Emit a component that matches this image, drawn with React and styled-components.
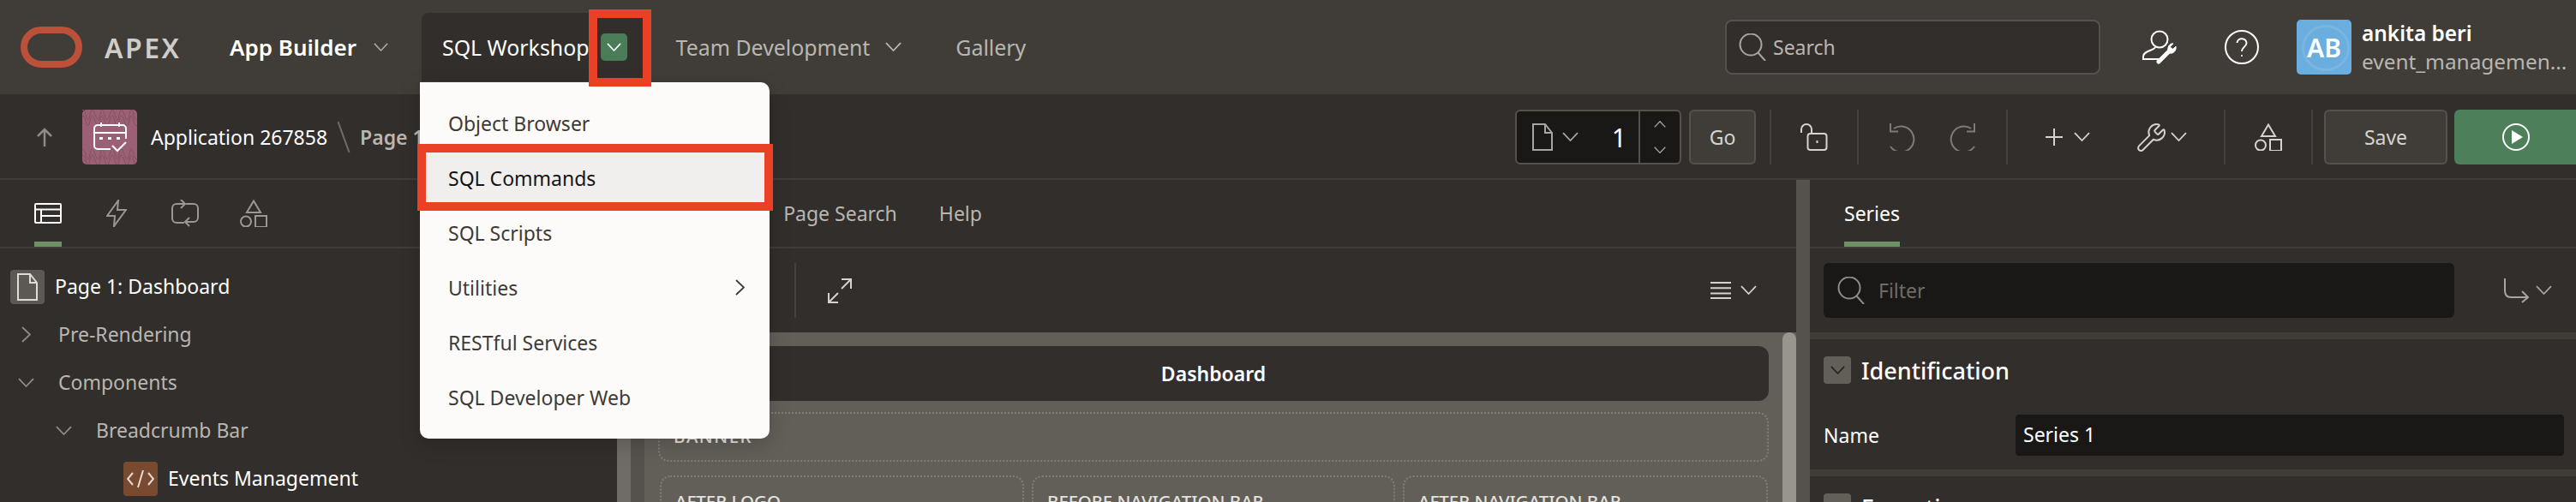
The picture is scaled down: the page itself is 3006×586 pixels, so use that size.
import React from 'react'
import styled, { createGlobalStyle } from 'styled-components'
import { Wrench } from 'lucide-react'

const GlobalStyle = createGlobalStyle`
  html, body {
    margin: 0;
    padding: 0;
    width: 3006px;
    height: 586px;
    overflow: hidden;
    background: #322e2b;
  }
  * { box-sizing: border-box; }
`

const wave = (y, n, amp) => {
  let d = `M-2 ${y} q3 ${-amp} 6 0`
  for (let i = 0; i < n; i++) d += ` t${i % 3 === 0 ? 5 : 6} 0`
  return d
}

function Chevron({ size = 19, color = 'currentColor' }) {
  return (
    <svg width={size} height={size * 0.58} viewBox="0 0 19 11" fill="none" stroke={color} strokeWidth="1.8">
      <path d="M1 1 L9.5 10 L18 1" />
    </svg>
  )
}

function SearchIcon({ color }) {
  return (
    <svg width="32" height="32" viewBox="0 0 32 32" fill="none" stroke={color} strokeWidth="2">
      <ellipse cx="14" cy="13" rx="12.5" ry="12.5" />
      <path d="M22.5 22.5 L31 32" />
    </svg>
  )
}

function DocIcon({ color }) {
  return (
    <svg width="24" height="32" viewBox="0 0 24 32" fill="none" stroke={color} strokeWidth="2">
      <path d="M1 1 H15 L23 11 V31 H1 Z M15 1 V11 H23" />
    </svg>
  )
}

function ShapesIcon({ color }) {
  return (
    <svg width="32" height="32" viewBox="0 0 32 32" fill="none" stroke={color} strokeWidth="2">
      <path d="M16 1.5 L24 15 H8 Z" />
      <circle cx="7" cy="25.5" r="6" />
      <rect x="18" y="19" width="13" height="13" />
    </svg>
  )
}

function OracleLogo() {
  return (
    <svg width="72" height="48" viewBox="0 0 72 48" fill="none">
      <rect x="4" y="4" width="64" height="40" rx="20" stroke="#bc5039" strokeWidth="8" />
    </svg>
  )
}

function UserWrenchIcon() {
  return (
    <svg width="40" height="40" viewBox="0 0 40 40" fill="none" stroke="#fff" strokeWidth="2">
      <circle cx="20" cy="11" r="9.5" />
      <path d="M15 20 C14 24 1 24 1 31 V34 H19" />
      <path d="M19 37 L33 23" strokeWidth="5" strokeLinecap="round" />
      <path d="M30 24 C29 19 33 15 36 16 L32 20 L35 23 L39 19 C40 24 36 28 32 27 Z" fill="#fff" strokeWidth="1" />
    </svg>
  )
}

function HelpIcon() {
  return (
    <svg width="40" height="40" viewBox="0 0 40 40" fill="none" stroke="#fff" strokeWidth="2">
      <circle cx="20" cy="20" r="19" />
      <path d="M14.5 15 C15 8 26 9 25.5 15.5 C25 20 20 20 20 25" />
      <circle cx="20" cy="30" r="1" fill="#fff" stroke="none" />
    </svg>
  )
}

function CalendarBadge() {
  const rows = [6, 13, 52, 59]
  return (
    <svg width="64" height="64" viewBox="0 0 64 64" fill="none">
      <rect width="64" height="64" rx="5" fill="#9b6075" />
      {rows.map((y) => (
        <path key={y} d={wave(y, 11, 12)} stroke="#86505f" strokeWidth="1" />
      ))}
      <path
        d="M33 46 H18 a4 4 0 0 1 -4 -4 V22 a4 4 0 0 1 4 -4 H47 a4 4 0 0 1 4 4 V34 M14 27 H51 M22 15 V20 M43 15 V20"
        stroke="#fff"
        strokeWidth="2"
      />
      <path d="M20 32 h4 v3 h-4 z M30 32 h4 v3 h-4 z M40 32 h4 v3 h-4 z" fill="#fff" />
      <path d="M35 42 L41 48 L51 38" stroke="#fff" strokeWidth="2" />
    </svg>
  )
}

function LayoutIcon() {
  return (
    <svg width="32" height="24" viewBox="0 0 32 24" fill="none" stroke="#fff" strokeWidth="2">
      <rect x="1" y="1" width="30" height="22" rx="1" />
      <path d="M1 7.5 H31 M8 7.5 V23 M8 15 H31" />
    </svg>
  )
}

function BoltIcon() {
  return (
    <svg width="24" height="32" viewBox="0 0 24 32" fill="none" stroke="#9b9893" strokeWidth="2">
      <path d="M14 1 L1 19 H10 L9 31 L23 12 H13 Z" />
    </svg>
  )
}

function CycleIcon() {
  return (
    <svg width="32" height="32" viewBox="0 0 32 32" fill="none" stroke="#9b9893" strokeWidth="2">
      <path d="M17 5 H26 a5 5 0 0 1 5 5 V21 a5 5 0 0 1 -5 5 H17 M21 21 L16 26 L21 31" />
      <path d="M15 27 H6 a5 5 0 0 1 -5 -5 V10 a5 5 0 0 1 5 -5 H15 M11 0 L16 5 L11 10" />
    </svg>
  )
}

function CodeIcon() {
  return (
    <svg width="32" height="22" viewBox="0 0 32 22" fill="none" stroke="#e8dcd3" strokeWidth="2">
      <path d="M7 4 L1 11 L7 18 M25 4 L31 11 L25 18 M19 1 L13 21" />
    </svg>
  )
}

function LockOpenIcon() {
  return (
    <svg width="32" height="32" viewBox="0 0 32 32" fill="none" stroke="#d5d3cf" strokeWidth="2">
      <rect x="8.5" y="12" width="22" height="19" rx="3" />
      <path d="M1 11 V7 a6 6 0 0 1 12 0 V12 M19.5 20 V23" />
    </svg>
  )
}

function UndoIcon() {
  return (
    <svg width="30" height="32" viewBox="0 0 30 32" fill="none" stroke="#7e7b76" strokeWidth="2">
      <path d="M1 27 A15 15 0 1 0 5 6 M1 0 V9.5 H10" />
    </svg>
  )
}

function RedoIcon() {
  return (
    <svg width="30" height="32" viewBox="0 0 30 32" fill="none" stroke="#7e7b76" strokeWidth="2">
      <path d="M29 27 A15 15 0 1 1 25 6 M29 0 V9.5 H20" />
    </svg>
  )
}

function PlusIcon() {
  return (
    <svg width="20" height="20" viewBox="0 0 20 20" fill="none" stroke="#d5d3cf" strokeWidth="2">
      <path d="M10 0 V20 M0 10 H20" />
    </svg>
  )
}

function RunIcon() {
  return (
    <svg width="32" height="32" viewBox="0 0 32 32" fill="none" stroke="#fff" strokeWidth="2">
      <circle cx="16" cy="16" r="15" />
      <path d="M11 8 L24 16 L11 24 Z" fill="#fff" stroke="none" />
    </svg>
  )
}

function ExpandIcon() {
  return (
    <svg width="28" height="29" viewBox="0 0 28 29" fill="none" stroke="#d5d3cf" strokeWidth="2">
      <path d="M16 1 H27 V12 M27 1 L16 12 M1 17 V28 H12 M1 28 L12 17" />
    </svg>
  )
}

function MenuLinesIcon() {
  return (
    <svg width="24" height="20" viewBox="0 0 24 20" fill="none" stroke="#d5d3cf" strokeWidth="2">
      <path d="M0 1 H24 M0 7.3 H24 M0 13.6 H24 M0 19 H24" />
    </svg>
  )
}

function GotoIcon() {
  return (
    <svg width="29" height="29" viewBox="0 0 29 29" fill="none" stroke="#a8a5a0" strokeWidth="2">
      <path d="M1 0 V14 C1 20 4 22 8 22 H27 M21 15 L28 22 L21 28" />
    </svg>
  )
}

const Page = styled.div`
  position: relative;
  width: 3006px;
  height: 586px;
  overflow: hidden;
  display: flex;
  flex-direction: column;
  background: #322e2b;
  font-family: "Noto Sans", "Open Sans", sans-serif;
  font-size: 23px;
  color: #fff;
`

const Header = styled.header`
  flex: 0 0 110px;
  display: flex;
  align-items: center;
  padding: 0 18px 0 24px;
  background: #403d38;
`

const Brand = styled.span`
  margin-left: 26px;
  width: 96px;
  font-size: 32px;
  font-weight: 600;
  letter-spacing: 2.5px;
  color: #cfcdc9;
`

const Nav = styled.nav`
  display: flex;
  gap: 15px;
  margin-left: 26px;
  font-size: 24.9px;
`

const NavItem = styled.div`
  display: flex;
  align-items: center;
  gap: ${(p) => p.$gap || 18}px;
  height: 80px;
  padding: ${(p) => (p.$active ? '0 18px 0 24px' : '0 24px')};
  border-radius: 8px 8px 0 0;
  background: ${(p) => (p.$active ? '#322e2b' : 'transparent')};
  color: ${(p) => p.$color || '#b9b6b1'};
  font-size: ${(p) => (p.$weight ? '26px' : 'inherit')};
  font-weight: ${(p) => p.$weight || 400};
  white-space: nowrap;
`

const GreenToggle = styled.span`
  display: flex;
  align-items: center;
  justify-content: center;
  width: 31px;
  height: 32px;
  border-radius: 5px;
  background: #4a7d57;
  color: #fff;
`

const SearchBox = styled.div`
  display: flex;
  align-items: center;
  gap: 8px;
  width: 438px;
  height: 64px;
  margin-left: auto;
  padding: 0 14px;
  background: #322e2b;
  border: 2px solid #55514c;
  border-radius: 8px;
  color: #b9b6b1;
`

const HeadIcon = styled.span`
  display: flex;
  margin-left: ${(p) => p.$left}px;
`

const Avatar = styled.div`
  position: relative;
  display: flex;
  align-items: center;
  justify-content: center;
  width: 64px;
  height: 64px;
  margin-left: 44px;
  overflow: hidden;
  border-radius: 5px;
  background: #69aedf;
  font-size: 30px;
  font-weight: 600;
  &::before {
    content: "";
    position: absolute;
    inset: 6px 2px 4px 6px;
    border: 3px solid #7cb6df;
    border-radius: 50%;
  }
`

const AvatarText = styled.span`
  position: relative;
`

const UserBlock = styled.div`
  display: flex;
  flex-direction: column;
  width: 232px;
  margin-left: 12px;
  white-space: nowrap;
  font-size: 24.4px;
  line-height: 33px;
`

const UserName = styled.span`
  font-weight: 600;
`

const UserSub = styled.span`
  color: #b9b6b1;
`

const Toolbar = styled.div`
  flex: 0 0 100px;
  display: flex;
  align-items: center;
  padding-left: 42px;
  padding-top: 2px;
  border-bottom: 2px solid #403d38;
`

const UpArrow = styled.svg`
  width: 20px;
  height: 22px;
  margin-right: 34px;
`

const Crumb = styled.span`
  margin-left: ${(p) => p.$left || 0}px;
  font-weight: ${(p) => p.$weight || 400};
  color: ${(p) => p.$color || '#fff'};
  white-space: nowrap;
`

const CrumbSlash = styled.span`
  width: 2px;
  height: 38px;
  margin: 0 18px 0 18px;
  background: #6f6c66;
  transform: rotate(-20deg);
`

const PageBox = styled.div`
  display: flex;
  align-items: center;
  width: 194px;
  height: 64px;
  margin-left: auto;
  padding-left: 18px;
  background: #191816;
  border: 2px solid #55514c;
  border-radius: 6px;
  color: #a8a5a0;
`

const PageKind = styled.span`
  display: flex;
  align-items: center;
  gap: 11px;
`

const PageNumber = styled.span`
  flex: 1;
  padding-right: 14px;
  text-align: right;
  color: #fff;
  font-size: 30px;
`

const Spinner = styled.div`
  display: flex;
  flex-direction: column;
  align-items: center;
  justify-content: center;
  gap: 22px;
  width: 48px;
  height: 100%;
  border-left: 2px solid #55514c;
  svg:first-child { transform: rotate(180deg); }
`

const ToolButton = styled.button`
  display: flex;
  align-items: center;
  justify-content: center;
  width: ${(p) => p.$width}px;
  height: 64px;
  margin-left: ${(p) => p.$left}px;
  background: #403d38;
  border: 2px solid #55514c;
  border-radius: 6px;
  color: #d5d3cf;
  font: inherit;
`

const Divider = styled.span`
  flex: 0 0 2px;
  height: 64px;
  margin-left: ${(p) => p.$left || 0}px;
  background: #45413d;
`

const ToolSection = styled.div`
  display: flex;
  align-items: center;
  justify-content: center;
  gap: ${(p) => p.$gap || 0}px;
  width: ${(p) => p.$width}px;
  color: #d5d3cf;
`

const ToolCombo = styled.span`
  display: flex;
  align-items: center;
  gap: ${(p) => p.$gap}px;
`

const RunButton = styled.div`
  display: flex;
  align-items: center;
  flex: 0 0 142px;
  height: 64px;
  margin-left: 8px;
  padding-left: 56px;
  background: #4d7f5a;
  border-radius: 6px 0 0 6px;
`

const Body = styled.div`
  flex: 1;
  display: flex;
  min-height: 0;
`

const Column = styled.section`
  display: flex;
  flex-direction: column;
  flex: 0 0 ${(p) => p.$width}px;
  min-width: 0;
`

const Splitter = styled.div`
  flex: 0 0 16px;
  background: #55514c;
`

const PanelScroll = styled.div`
  flex: 0 0 16px;
  background: #6f6b66;
`

const TabBar = styled.div`
  flex: 0 0 80px;
  display: flex;
  align-items: stretch;
  gap: ${(p) => p.$gap}px;
  padding-left: ${(p) => p.$left}px;
  border-bottom: 2px solid #403d38;
`

const Tab = styled.div`
  display: flex;
  align-items: center;
  justify-content: center;
  height: 78px;
  padding-top: 6px;
  border-bottom: 6px solid ${(p) => (p.$on ? '#6e9168' : 'transparent')};
  color: ${(p) => (p.$on ? '#fff' : '#b9b6b1')};
  white-space: nowrap;
`

const IconTab = styled(Tab)`
  width: 32px;
`

const Tree = styled.div`
  padding-top: 17px;
`

const TreeRow = styled.div`
  display: flex;
  align-items: center;
  height: 56px;
  padding-left: ${(p) => p.$indent}px;
  color: ${(p) => (p.$bright ? '#fff' : '#b9b6b1')};
  white-space: nowrap;
`

const TreeLabel = styled.span`
  margin-bottom: 3px;
`

const TreeToggle = styled.span`
  display: flex;
  align-items: center;
  justify-content: center;
  width: 44px;
  margin-right: 16px;
  color: #8f8c87;
  svg { transform: ${(p) => (p.$closed ? 'rotate(-90deg)' : 'none')}; }
`

const NodeIcon = styled.span`
  display: flex;
  align-items: center;
  justify-content: center;
  width: 40px;
  height: 40px;
  margin-right: 12px;
  border-radius: 4px;
  background: ${(p) => p.$bg};
`

const CenterTools = styled.div`
  flex: 0 0 98px;
  display: flex;
  align-items: center;
  padding: 0 46px 0 175px;
`

const ExpandSlot = styled.span`
  display: flex;
  margin-left: 37px;
`

const ViewMenu = styled.span`
  display: flex;
  align-items: center;
  gap: 11px;
  margin-left: auto;
  color: #d5d3cf;
`

const Canvas = styled.div`
  flex: 1;
  display: flex;
  min-height: 0;
  background: #625e58;
`

const CanvasInner = styled.div`
  flex: 1;
  display: flex;
  flex-direction: column;
  padding: 16px 16px 0;
  min-width: 0;
`

const CanvasScroll = styled.div`
  flex: 0 0 16px;
  background: #98958f;
  border-radius: 8px 8px 0 0;
`

const TitleBar = styled.div`
  flex: 0 0 64px;
  display: flex;
  align-items: center;
  justify-content: center;
  border-radius: 12px;
  background: #322e2b;
  font-weight: 600;
`

const Slot = styled.div`
  padding: ${(p) => (p.$wide ? '12px 16px' : '14px 16px')};
  height: ${(p) => (p.$wide ? '58px' : '80px')};
  border: 2px dotted #807c76;
  border-radius: 12px;
  color: #e4e2de;
  font-size: 20.5px;
  font-weight: 500;
  letter-spacing: ${(p) => (p.$wide ? '1.5px' : '0')};
  white-space: nowrap;
`

const BannerSlot = styled(Slot)`
  flex: 0 0 58px;
  margin-top: 13px;
`

const SlotRow = styled.div`
  display: grid;
  grid-template-columns: 425px 424px 426px;
  gap: 9px;
  margin: 16px 2px 0;
`

const FilterRow = styled.div`
  flex: 0 0 98px;
  display: flex;
  align-items: center;
  padding-left: 16px;
`

const FilterBox = styled.div`
  display: flex;
  align-items: center;
  gap: 16px;
  width: 736px;
  height: 64px;
  padding-left: 16px;
  border-radius: 6px;
  background: #191816;
  color: #6f6c66;
`

const OrderMenu = styled.span`
  display: flex;
  align-items: center;
  gap: 8px;
  margin-left: 58px;
  color: #a8a5a0;
`

const Group = styled.div`
  padding: 20px 14px 16px 16px;
  border-top: 8px solid #403d38;
`

const GroupHead = styled.div`
  display: flex;
  align-items: center;
  gap: 12px;
  height: 32px;
  font-size: 27px;
  font-weight: 500;
`

const GroupToggle = styled.span`
  display: flex;
  align-items: center;
  justify-content: center;
  width: 32px;
  height: 32px;
  border-radius: 4px;
  background: #625e58;
  color: #23211f;
`

const Field = styled.div`
  display: flex;
  align-items: center;
  margin-top: 36px;
`

const FieldLabel = styled.label`
  flex: 0 0 224px;
`

const FieldInput = styled.div`
  flex: 1;
  height: 48px;
  padding-left: 9px;
  line-height: 46px;
  border-radius: 4px;
  background: #191816;
`

const Menu = styled.div`
  position: absolute;
  left: 490px;
  top: 96px;
  width: 408px;
  height: 416px;
  padding: 17px 0;
  border-radius: 0 10px 10px 10px;
  background: #fcfbf9;
  color: #3e3b37;
  box-shadow: 0 6px 24px rgba(0, 0, 0, 0.18);
`

const MenuItem = styled.div`
  position: relative;
  display: flex;
  align-items: center;
  justify-content: space-between;
  height: 64px;
  padding: 0 25px 3px 33px;
  background: ${(p) => (p.$on ? '#f0efed' : 'transparent')};
  color: ${(p) => (p.$on ? '#161513' : 'inherit')};
`

const SideChevron = styled.span`
  display: flex;
  transform: rotate(-90deg);
`

const CommandsMark = styled.span`
  position: absolute;
  left: -3px;
  top: -9px;
  width: 415px;
  height: 78px;
  border: 10px solid #ea4026;
`

const WorkshopMark = styled.span`
  position: absolute;
  left: 687px;
  top: 11px;
  width: 73px;
  height: 90px;
  border: 10px solid #ea4026;
`

export default function App() {
  return (
    <Page>
      <GlobalStyle />
      <Header>
        <OracleLogo />
        <Brand>APEX</Brand>
        <Nav>
          <NavItem $color="#fff" $weight={600} $gap={20}>
            App Builder <Chevron size={17} color="#a8a5a0" />
          </NavItem>
          <NavItem $active $color="#fff" $gap={13}>
            SQL Workshop
            <GreenToggle>
              <Chevron size={17} />
            </GreenToggle>
          </NavItem>
          <NavItem>
            Team Development <Chevron />
          </NavItem>
          <NavItem>Gallery</NavItem>
        </Nav>
        <SearchBox>
          <SearchIcon color="#a8a5a0" />
          Search
        </SearchBox>
        <HeadIcon $left={49}>
          <UserWrenchIcon />
        </HeadIcon>
        <HeadIcon $left={56}>
          <HelpIcon />
        </HeadIcon>
        <Avatar>
          <AvatarText>AB</AvatarText>
        </Avatar>
        <UserBlock>
          <UserName>ankita beri</UserName>
          <UserSub>event_managemen...</UserSub>
        </UserBlock>
      </Header>

      <Toolbar>
        <UpArrow viewBox="0 0 20 22" fill="none" stroke="#8f8c87" strokeWidth="2.5">
          <path d="M10 22 V2 M2 10 L10 2 L18 10" />
        </UpArrow>
        <CalendarBadge />
        <Crumb $left={16}>Application 267858</Crumb>
        <CrumbSlash />
        <Crumb $weight={600} $color="#b9b6b1">Page 1</Crumb>

        <PageBox>
          <PageKind>
            <DocIcon color="#a8a5a0" />
            <Chevron />
          </PageKind>
          <PageNumber>1</PageNumber>
          <Spinner>
            <Chevron size={14} />
            <Chevron size={14} />
          </Spinner>
        </PageBox>
        <ToolButton $width={78} $left={9}>Go</ToolButton>
        <Divider $left={16} />
        <ToolSection $width={100}>
          <LockOpenIcon />
        </ToolSection>
        <Divider />
        <ToolSection $width={172} $gap={40}>
          <UndoIcon />
          <RedoIcon />
        </ToolSection>
        <Divider />
        <ToolSection $width={252} $gap={53}>
          <ToolCombo $gap={13}>
            <PlusIcon />
            <Chevron />
          </ToolCombo>
          <ToolCombo $gap={4}>
            <Wrench size={37} strokeWidth={1.3} color="#d5d3cf" />
            <Chevron />
          </ToolCombo>
        </ToolSection>
        <Divider />
        <ToolSection $width={100}>
          <ShapesIcon color="#d5d3cf" />
        </ToolSection>
        <Divider />
        <ToolButton $width={144} $left={13}>Save</ToolButton>
        <RunButton>
          <RunIcon />
        </RunButton>
      </Toolbar>

      <Body>
        <Column $width={720}>
          <TabBar $gap={48} $left={40}>
            <IconTab $on><LayoutIcon /></IconTab>
            <IconTab><BoltIcon /></IconTab>
            <IconTab><CycleIcon /></IconTab>
            <IconTab><ShapesIcon color="#9b9893" /></IconTab>
          </TabBar>
          <Tree>
            <TreeRow $indent={12} $bright>
              <NodeIcon $bg="#5c5954"><DocIcon color="#dedcd8" /></NodeIcon>
              <TreeLabel>Page 1: Dashboard</TreeLabel>
            </TreeRow>
            <TreeRow $indent={8}>
              <TreeToggle $closed><Chevron size={19} /></TreeToggle>
              <TreeLabel>Pre-Rendering</TreeLabel>
            </TreeRow>
            <TreeRow $indent={8}>
              <TreeToggle><Chevron size={19} /></TreeToggle>
              <TreeLabel>Components</TreeLabel>
            </TreeRow>
            <TreeRow $indent={52}>
              <TreeToggle><Chevron size={19} /></TreeToggle>
              <TreeLabel>Breadcrumb Bar</TreeLabel>
            </TreeRow>
            <TreeRow $indent={144} $bright>
              <NodeIcon $bg="#784a30"><CodeIcon /></NodeIcon>
              <TreeLabel>Events Management</TreeLabel>
            </TreeRow>
          </Tree>
        </Column>
        <PanelScroll />
        <Splitter />

        <Column $width={1344}>
          <TabBar $gap={49} $left={40}>
            <Tab>Layout</Tab>
            <Tab>Page Search</Tab>
            <Tab>Help</Tab>
          </TabBar>
          <CenterTools>
            <Divider />
            <ExpandSlot><ExpandIcon /></ExpandSlot>
            <ViewMenu>
              <MenuLinesIcon />
              <Chevron />
            </ViewMenu>
          </CenterTools>
          <Canvas>
            <CanvasInner>
              <TitleBar>Dashboard</TitleBar>
              <BannerSlot $wide>BANNER</BannerSlot>
              <SlotRow>
                <Slot>AFTER LOGO</Slot>
                <Slot>BEFORE NAVIGATION BAR</Slot>
                <Slot>AFTER NAVIGATION BAR</Slot>
              </SlotRow>
            </CanvasInner>
            <CanvasScroll />
          </Canvas>
        </Column>
        <Splitter />

        <Column $width={894}>
          <TabBar $gap={0} $left={40}>
            <Tab $on>Series</Tab>
          </TabBar>
          <FilterRow>
            <FilterBox>
              <SearchIcon color="#8f8c87" />
              Filter
            </FilterBox>
            <OrderMenu>
              <GotoIcon />
              <Chevron />
            </OrderMenu>
          </FilterRow>
          <Group>
            <GroupHead>
              <GroupToggle><Chevron size={17} /></GroupToggle>
              Identification
            </GroupHead>
            <Field>
              <FieldLabel>Name</FieldLabel>
              <FieldInput>Series 1</FieldInput>
            </Field>
          </Group>
          <Group>
            <GroupHead>
              <GroupToggle><Chevron size={17} /></GroupToggle>
              Execution
            </GroupHead>
          </Group>
        </Column>
      </Body>

      <Menu>
        <MenuItem>Object Browser</MenuItem>
        <MenuItem $on>
          SQL Commands
          <CommandsMark />
        </MenuItem>
        <MenuItem>SQL Scripts</MenuItem>
        <MenuItem>
          Utilities
          <SideChevron><Chevron size={19} /></SideChevron>
        </MenuItem>
        <MenuItem>RESTful Services</MenuItem>
        <MenuItem>SQL Developer Web</MenuItem>
      </Menu>
      <WorkshopMark />
    </Page>
  )
}
